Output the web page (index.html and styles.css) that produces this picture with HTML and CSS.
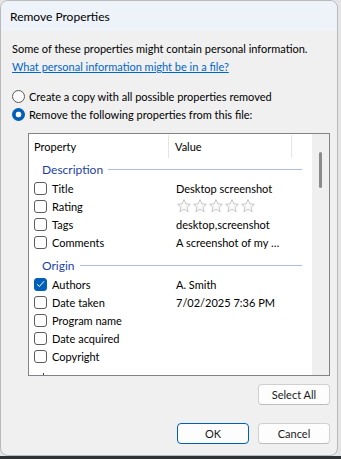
FILE: index.html
```html
<!DOCTYPE html>
<html lang="en">
<head>
    <meta charset="UTF-8">
    <meta name="viewport" content="width=device-width, initial-scale=1.0">
    <title>Remove Properties</title>
    <link rel="stylesheet" href="styles.css">
</head>
<body>
    <div class="dialog">
        <div class="titlebar">Remove Properties</div>
        <div class="content">
            <p class="intro">Some of these properties might contain personal information.</p>
            <a class="link" href="#">What personal information might be in a file?</a>

            <div class="options">
                <label class="radio"><span class="dot"></span>Create a copy with all possible properties removed</label>
                <label class="radio"><span class="dot on"></span>Remove the following properties from this file:</label>
            </div>

            <div class="listbox">
                <div class="list">
                    <div class="header">
                        <div class="col-prop">Property</div>
                        <div class="col-val">Value</div>
                        <div class="col-end"></div>
                    </div>
                    <div class="rows">
                        <div class="group first"><span>Description</span></div>
                        <div class="row"><span class="check"></span><span class="name">Title</span><span class="value">Desktop screenshot</span></div>
                        <div class="row"><span class="check"></span><span class="name">Rating</span>
                            <span class="value stars">
                                <svg width="80" height="14" viewBox="0 0 80 14">
                                    <g fill="#fbfbfb" stroke="#c6c6c6" stroke-width="1">
                                        <path id="star" d="M7 0.6 L8.9 4.9 L13.5 5.2 L10 8.2 L11.2 12.8 L7 10.2 L2.8 12.8 L4 8.2 L0.5 5.2 L5.1 4.9 Z"/>
                                        <use href="#star" x="16"/>
                                        <use href="#star" x="32"/>
                                        <use href="#star" x="48"/>
                                        <use href="#star" x="64"/>
                                    </g>
                                </svg>
                            </span>
                        </div>
                        <div class="row"><span class="check"></span><span class="name">Tags</span><span class="value">desktop,screenshot</span></div>
                        <div class="row"><span class="check"></span><span class="name">Comments</span><span class="value">A screenshot of my …</span></div>
                        <div class="group"><span>Origin</span></div>
                        <div class="row"><span class="check checked">
                            <svg width="9" height="8" viewBox="0 0 9 8"><path d="M1 4.2 L3.4 6.5 L8 1.3" fill="none" stroke="#fff" stroke-width="1"/></svg>
                        </span><span class="name">Authors</span><span class="value">A. Smith</span></div>
                        <div class="row"><span class="check"></span><span class="name">Date taken</span><span class="value">7/02/2025 7:36 PM</span></div>
                        <div class="row"><span class="check"></span><span class="name">Program name</span><span class="value"></span></div>
                        <div class="row"><span class="check"></span><span class="name">Date acquired</span><span class="value"></span></div>
                        <div class="row"><span class="check"></span><span class="name">Copyright</span><span class="value"></span></div>
                        <div class="more"></div>
                    </div>
                </div>
                <div class="scrollbar"><div class="thumb"></div></div>
            </div>

            <div class="select-row">
                <button class="btn">Select All</button>
            </div>
            <div class="footer">
                <button class="btn default">OK</button>
                <button class="btn">Cancel</button>
            </div>
        </div>
    </div>
</body>
</html>
```

FILE: styles.css
```css
body
{
    margin: 0;
    font-family: Lato, "Noto Sans", sans-serif;
    font-size: 11px;
    color: #000;
    background: linear-gradient(to bottom, #e4e4e4 456px, #2e3234 456px);
    height: 459px;
    overflow: hidden;
}
.dialog
{
    width: 338px;
    height: 456px;
    box-sizing: border-box;
    background-color: #f0f0f0;
    border: 1px solid #b9b9b9;
    border-radius: 8px;
    overflow: hidden;
}
.titlebar
{
    height: 30px;
    background-color: #eef2f9;
    display: flex;
    align-items: center;
    padding-left: 9px;
    font-size: 12px;
}
.content
{
    padding: 9px 0 0 11px;
}
.intro
{
    margin: 0;
    line-height: 18px;
    white-space: nowrap;
}
.link
{
    display: block;
    line-height: 18px;
    color: #0066cc;
}
.options
{
    margin-top: 11px;
}
.radio
{
    display: flex;
    align-items: center;
    height: 18px;
    gap: 4px;
}
.dot
{
    width: 11px;
    height: 11px;
    border: 1px solid #5a5a5a;
    border-radius: 50%;
    background: #fbfbfb;
}
.dot.on
{
    width: 13px;
    height: 13px;
    border: none;
    background: radial-gradient(circle, #fff 0 2.6px, #005fb8 3.2px);
}
.listbox
{
    margin: 10px 0 0 16px;
    width: 302px;
    height: 243px;
    box-sizing: border-box;
    border: 1px solid #838383;
    display: flex;
}
.list
{
    flex: 1;
    background: #fff;
    overflow: hidden;
}
.scrollbar
{
    width: 17px;
    background: #efefef;
    display: flex;
    justify-content: center;
}
.thumb
{
    width: 3px;
    height: 36px;
    margin-top: 18px;
    background: #8a8a8a;
    border-radius: 2px;
}
.header
{
    display: flex;
    height: 25px;
    align-items: stretch;
}
.header div
{
    display: flex;
    align-items: center;
    margin: 1px 0;
}
.col-prop
{
    width: 134px;
    padding-left: 5px;
    border-right: 1px solid #e5e5e5;
}
.col-val
{
    width: 116px;
    padding-left: 6px;
    border-right: 1px solid #e5e5e5;
}
.group
{
    display: flex;
    align-items: center;
    height: 20px;
    margin-top: 4px;
    padding: 0 10px 0 13px;
    color: #1c3fa8;
    font-size: 12px;
    gap: 5px;
}
.group.first
{
    margin-top: 0;
}
.group::after
{
    content: "";
    flex: 1;
    height: 1px;
    background: #aabbe4;
}
.row
{
    display: flex;
    align-items: center;
    height: 18px;
    padding-left: 5px;
}
.check
{
    width: 11px;
    height: 11px;
    border: 1px solid #5c5c5c;
    border-radius: 3px;
    display: flex;
    align-items: center;
    justify-content: center;
}
.check.checked
{
    background: #005fb8;
    border-color: #005fb8;
}
.name
{
    width: 124px;
    padding-left: 5px;
}
.value
{
    white-space: nowrap;
}
.stars
{
    display: flex;
    padding-left: 1px;
}
/* top of the next group, cut off by the list edge */
.more
{
    width: 1px;
    height: 2px;
    margin: 8px 0 0 14px;
    background: #1c3fa8;
}
.select-row
{
    display: flex;
    justify-content: flex-end;
    width: 318px;
    margin-top: 8px;
}
.footer
{
    display: flex;
    justify-content: flex-end;
    gap: 9px;
    width: 318px;
    margin-top: 18px;
}
.btn
{
    font-family: inherit;
    font-size: 11px;
    width: 72px;
    height: 21px;
    padding: 0;
    background: #fdfdfd;
    border: 1px solid #d0d0d0;
    border-bottom-color: #bcbcbc;
    border-radius: 4px;
    color: #1a1a1a;
}
.btn.default
{
    border-color: #005fb8;
}
```
